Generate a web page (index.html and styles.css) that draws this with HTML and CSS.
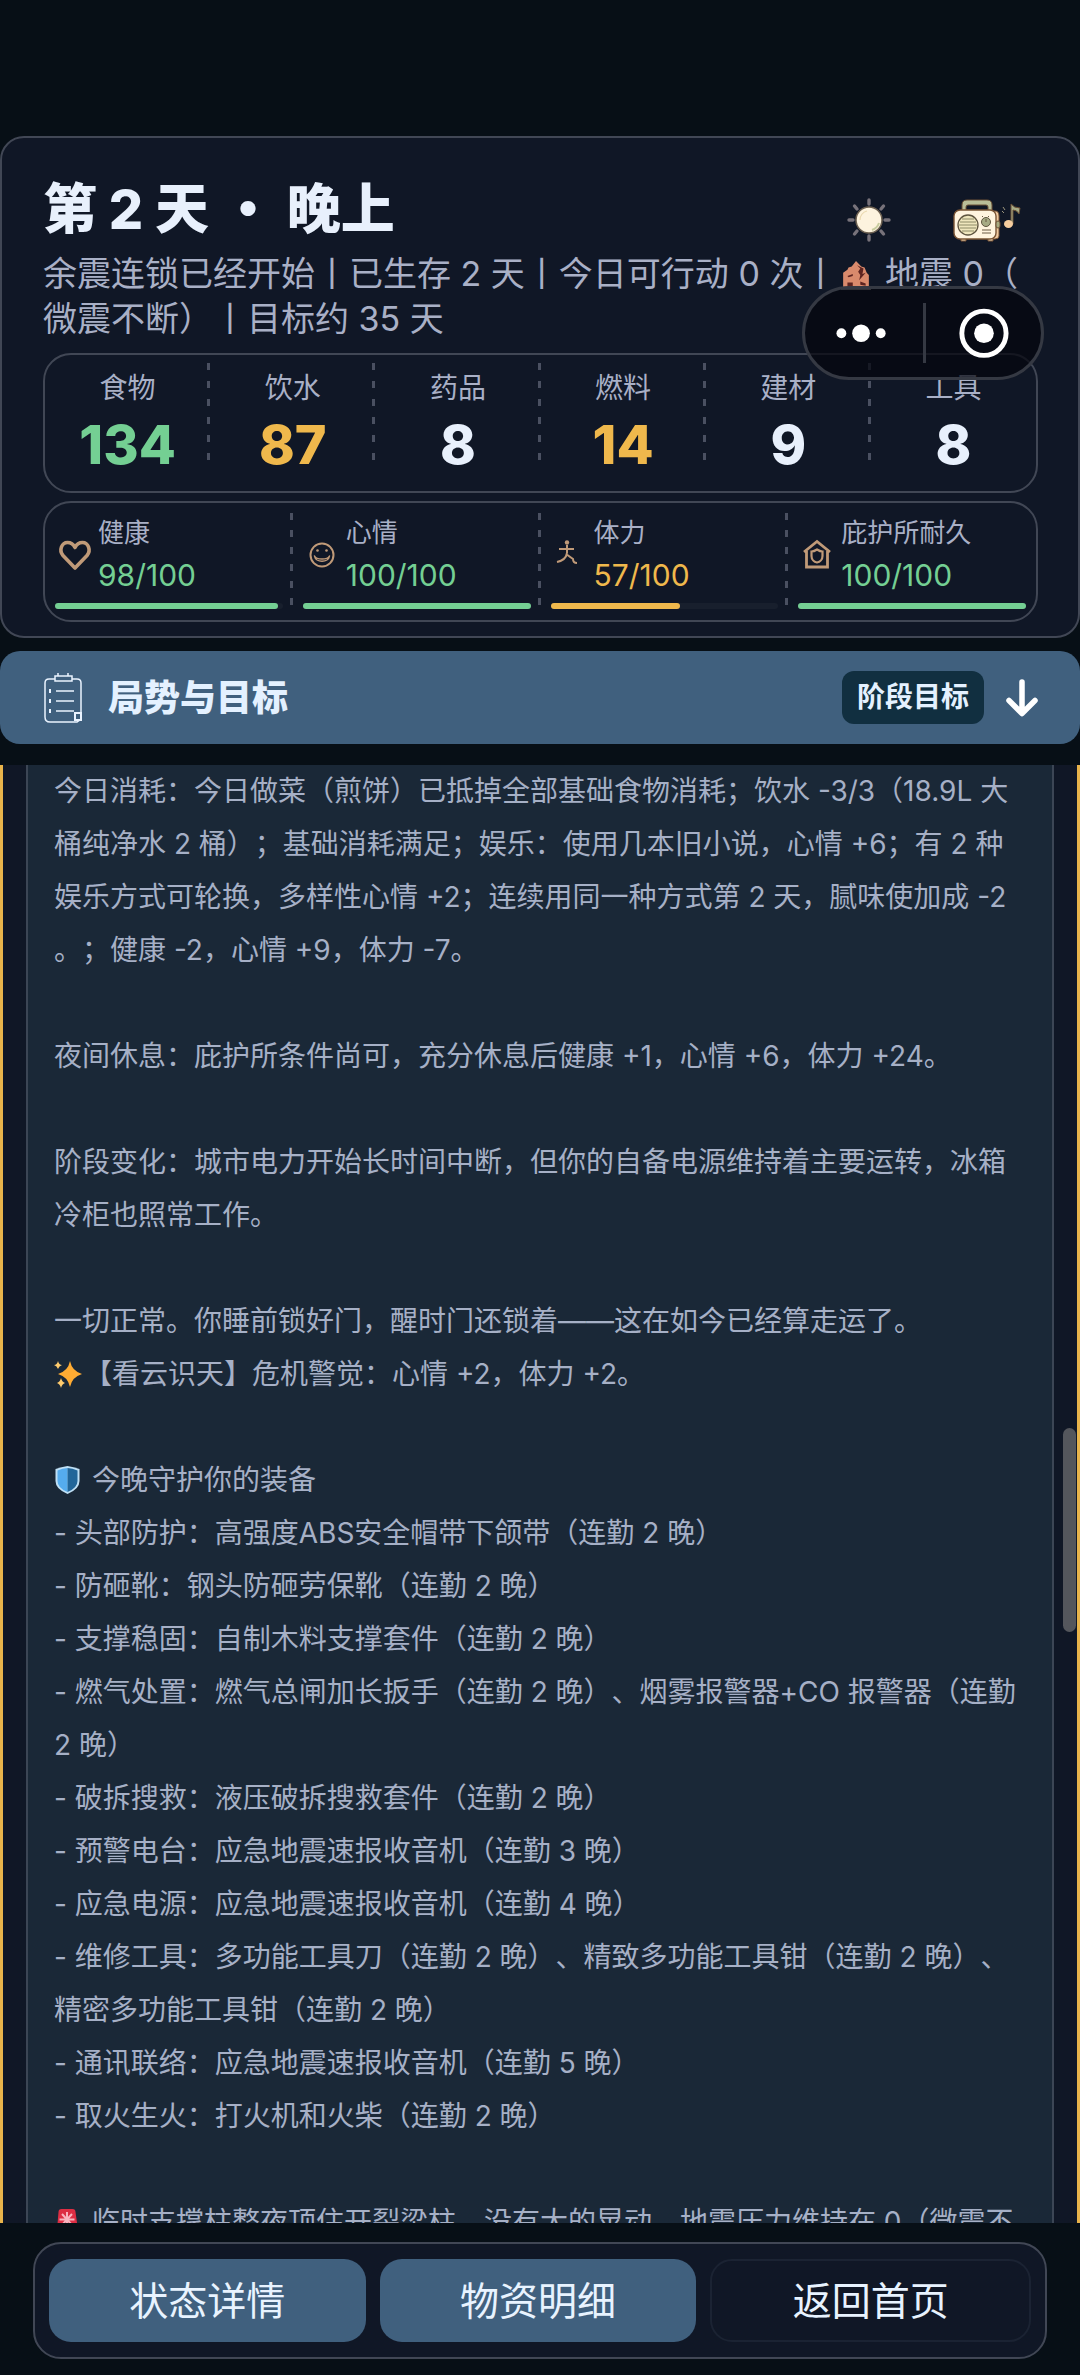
FILE: index.html
```html
<!DOCTYPE html>
<html lang="zh-CN">
<head>
    <meta charset="UTF-8">
    <meta name="viewport" content="width=device-width, initial-scale=1.0">
    <title>第 2 天 · 晚上</title>
    <link rel="stylesheet" href="styles.css">
</head>
<body>
    <header class="status">
        <div class="status-top">
            <h1>第 2 天 <span class="dot">·</span> 晚上</h1>
            <div class="status-icons">
                <svg class="icon-sun" viewBox="0 0 44 44" aria-hidden="true">
                    <g stroke="#77727a" stroke-width="3.4" stroke-linecap="round">
                        <path d="M22 2v4M22 38v4M2 22h4M38 22h4M7.500 8l2.500 3M34 11l2.500-3M7.500 36l2.500-3M34 33l2.500 3"/>
                    </g>
                    <circle cx="22" cy="22" r="13" fill="#fdf3de" stroke="#6d6152" stroke-width="1.500"/>
                    <path d="M13 22a9 9 0 0 1 7-9" fill="none" stroke="#ead9b0" stroke-width="1.200"/>
                    <path d="M25 32a11 11 0 0 0 7-7" fill="none" stroke="#c9cda0" stroke-width="2"/>
                </svg>
                <svg class="icon-radio" viewBox="0 0 68 44" aria-hidden="true">
                    <path d="M9 13V7q0-5 5-5h20q5 0 5 5v6h-4V9q0-2-2-2H15q-2 0-2 2v4z" fill="#b9bd98" stroke="#6b5136"/>
                    <path d="M36 13h6q4 0 4 5v20q0 3-4 3h-6z" fill="#efc9a0" stroke="#7a5536"/>
                    <path d="M8 39h5v4H8zM35 39h5v4h-5z" fill="#f2dcb8" stroke="#7a5536"/>
                    <rect x="1" y="12" width="42" height="29" rx="6" fill="#fff4df" stroke="#7a5536" stroke-width="1.400"/>
                    <rect x="43" y="23" width="4" height="7" rx="2" fill="#a8aa80" stroke="#6b5136"/>
                    <circle cx="15" cy="27" r="10" fill="#efe6bd" stroke="#5f5540" stroke-width="1.300"/>
                    <path d="M9 21h12M7 24h16M6 27h18M7 30h16M9 33h12" stroke="#8d8a66"/>
                    <circle cx="33" cy="24" r="4.500" fill="#a6aa84" stroke="#5f5540"/>
                    <path d="M33 21v3M29 32h9M29 35h9M29 18l1 1M36 18l-1 1" stroke="#6b5b45"/>
                    <path d="M58 26V6q3 4 9 4l-1 6q-2-4-6-4v14z" fill="#a8ab86" stroke="#6b5136"/>
                    <ellipse cx="55.500" cy="26" rx="4.500" ry="4" fill="#f5cd9f"/>
                    <path d="M50 9l2 3M49 13l2 2" stroke="#9b947c"/>
                </svg>
            </div>
        </div>

        <p class="summary">余震连锁已经开始丨已生存 2 天丨今日可行动 0 次丨<svg class="icon-ruin" viewBox="0 0 28 28" aria-hidden="true"><path d="M2 26V12l4-3 1-2 3-1 4-5 5 5 3 1 2 5 2 2v12z" fill="#d98a6c"/><path d="M15 5l6 3-1 5 3-1-6 7 1-5-2-3 2-3zM6 15l5-2v2l-4 1zM6 21h5v4H6zM18 20l5 2v2l-5-1z" fill="#5d2420"/><path d="M0 26h28v2H0z" fill="#a5a09f"/></svg> 地震 0（微震不断）丨目标约 35 天</p>

        <dl class="resources">
            <div class="resource"><dt>食物</dt><dd class="good">134</dd></div>
            <div class="resource"><dt>饮水</dt><dd class="warn">87</dd></div>
            <div class="resource"><dt>药品</dt><dd>8</dd></div>
            <div class="resource"><dt>燃料</dt><dd class="warn">14</dd></div>
            <div class="resource"><dt>建材</dt><dd>9</dd></div>
            <div class="resource"><dt>工具</dt><dd>8</dd></div>
        </dl>

        <div class="vitals">
            <div class="vital good">
                <div class="vital-info">
                    <svg viewBox="0 0 40 40" aria-hidden="true"><path d="M20 33L8 20.500C3.500 15 7 7.500 12.500 7.500c3.500 0 6 2 7.500 5 1.500-3 4-5 7.500-5C33 7.500 36.500 15 32 20.500z" fill="none" stroke="#c09a78" stroke-width="3.600" stroke-linejoin="round"/></svg>
                    <div><span class="vital-name">健康</span><span class="vital-value">98/100</span></div>
                </div>
                <div class="bar"><div class="bar-fill" style="width: 98%"></div></div>
            </div>
            <div class="vital good">
                <div class="vital-info">
                    <svg viewBox="0 0 40 40" aria-hidden="true"><g fill="none" stroke="#c09a78" stroke-width="2"><circle cx="19" cy="20" r="11.500"/><path d="M11.500 21c1 7 14 7 15 0-2 4-13 4-15 0z" stroke-width="1.500" stroke-linejoin="round"/></g><circle cx="14.500" cy="15.500" r="1.300" fill="#c09a78"/><circle cx="23.500" cy="15.500" r="1.300" fill="#c09a78"/></svg>
                    <div><span class="vital-name">心情</span><span class="vital-value">100/100</span></div>
                </div>
                <div class="bar"><div class="bar-fill" style="width: 100%"></div></div>
            </div>
            <div class="vital warn">
                <div class="vital-info">
                    <svg viewBox="0 0 40 40" aria-hidden="true"><circle cx="16" cy="7.500" r="2.200" fill="#c09a78"/><path d="M8 14h15M16 10v8M16 18q-1 7-10 9M15 19l7 5q0 4 4 4" fill="none" stroke="#c09a78" stroke-width="2"/></svg>
                    <div><span class="vital-name">体力</span><span class="vital-value">57/100</span></div>
                </div>
                <div class="bar"><div class="bar-fill" style="width: 57%"></div></div>
            </div>
            <div class="vital good">
                <div class="vital-info">
                    <svg viewBox="0 0 40 40" aria-hidden="true"><path d="M6 17L19 6.500 32 17M8.500 16v16h21V16" fill="none" stroke="#c09a78" stroke-width="2.800"/><path d="M19 14.500q3 2 5.500 2V21c0 3.500-2.500 6-5.500 6.500-3-.5-5.500-3-5.500-6.500v-4.500q2.500 0 5.500-2z" fill="none" stroke="#c09a78" stroke-width="2.200"/></svg>
                    <div><span class="vital-name">庇护所耐久</span><span class="vital-value">100/100</span></div>
                </div>
                <div class="bar"><div class="bar-fill" style="width: 100%"></div></div>
            </div>
        </div>

        <!-- mini program capsule, floats over the header -->
        <div class="capsule">
            <button type="button" aria-label="更多">
                <svg viewBox="0 0 120 88" aria-hidden="true"><g fill="#fff"><circle cx="37" cy="44" r="5"/><circle cx="57" cy="44" r="9"/><circle cx="77" cy="44" r="5"/></g></svg>
            </button>
            <button type="button" aria-label="关闭">
                <svg viewBox="0 0 120 88" aria-hidden="true"><circle cx="62" cy="44" r="22.500" fill="none" stroke="#fff" stroke-width="5"/><circle cx="62" cy="44" r="10" fill="#fff"/></svg>
            </button>
        </div>
    </header>

    <section class="goal-bar">
        <svg class="icon-clipboard" viewBox="0 0 38 50" aria-hidden="true">
            <g fill="none" stroke="#eaf3ff" stroke-width="1.500">
                <path d="M11 6H5q-4 0-4 4v34q0 5 5 5h27l4-3V10q0-4-4-4h-5M11 3h17v5H11zM14 0v3M24 0v3"/>
                <path d="M12 18h18M12 28h18M12 38h18"/>
                <path d="M6 16v4M6 26v4M6 36v4" stroke-width="2"/>
                <path d="M31 40h6v7h-6z" stroke-width="2"/>
            </g>
        </svg>
        <h2>局势与目标</h2>
        <button type="button" class="goal-tag">阶段目标</button>
        <svg class="icon-arrow" viewBox="0 0 32 38" aria-hidden="true"><path d="M16 3v31M3 21.500l13 13 13-13" fill="none" stroke="#fff" stroke-width="5.500" stroke-linecap="round" stroke-linejoin="round"/></svg>
    </section>

    <main class="log">
        <div class="log-panel">
            <p>今日消耗：今日做菜（煎饼）已抵掉全部基础食物消耗；饮水 -3/3（18.9L 大桶纯净水 2 桶）；基础消耗满足；娱乐：使用几本旧小说，心情 +6；有 2 种娱乐方式可轮换，多样性心情 +2；连续用同一种方式第 2 天，腻味使加成 -2。；健康 -2，心情 +9，体力 -7。</p>
            <p>夜间休息：庇护所条件尚可，充分休息后健康 +1，心情 +6，体力 +24。</p>
            <p>阶段变化：城市电力开始长时间中断，但你的自备电源维持着主要运转，冰箱冷柜也照常工作。</p>
            <p>一切正常。你睡前锁好门，醒时门还锁着——这在如今已经算走运了。<br><svg class="emoji" viewBox="0 0 28 28" aria-hidden="true"><path d="M16 1q2 10 12 13-10 3-12 13-2-10-12-13 10-3 12-13z" fill="#ffac33"/><path d="M4 1q1 4 4 4-3 1-4 4-1-3-4-4 3 0 4-4zM7 18q1 4 4 5-3 1-4 5-1-4-4-5 3-1 4-5z" fill="#ffcc6e"/></svg>【看云识天】危机警觉：心情 +2，体力 +2。</p>
            <div class="gear">
                <p class="gear-title"><svg class="emoji" viewBox="0 0 28 28" aria-hidden="true"><path d="M13.500 0q6 1 12 3v12q0 8-12 13-12-5-12-13V3q6-2 12-3z" fill="#bfe0f5"/><path d="M13.500 2q-5 0-10 2.500V15q0 7 10 11z" fill="#55acee"/><path d="M13.500 2q5 0 10 2.500V15q0 7-10 11z" fill="#226699"/></svg> 今晚守护你的装备</p>
                <p>- 头部防护：高强度ABS安全帽带下颌带（连勤 2 晚）</p>
                <p>- 防砸靴：钢头防砸劳保靴（连勤 2 晚）</p>
                <p>- 支撑稳固：自制木料支撑套件（连勤 2 晚）</p>
                <p>- 燃气处置：燃气总闸加长扳手（连勤 2 晚）、烟雾报警器+CO 报警器（连勤 2 晚）</p>
                <p>- 破拆搜救：液压破拆搜救套件（连勤 2 晚）</p>
                <p>- 预警电台：应急地震速报收音机（连勤 3 晚）</p>
                <p>- 应急电源：应急地震速报收音机（连勤 4 晚）</p>
                <p>- 维修工具：多功能工具刀（连勤 2 晚）、精致多功能工具钳（连勤 2 晚）、精密多功能工具钳（连勤 2 晚）</p>
                <p>- 通讯联络：应急地震速报收音机（连勤 5 晚）</p>
                <p>- 取火生火：打火机和火柴（连勤 2 晚）</p>
            </div>
            <p><svg class="emoji" viewBox="0 0 28 28" aria-hidden="true"><path d="M3 22L4.500 4q0-3 3-3h11q3 0 3 3L24 22z" fill="#dd2e44"/><path d="M2 22h23v6H2z" fill="#99aab5"/><path d="M13 4v15M5.500 11.500h15M8 6l10 11M18 6L8 17" stroke="#f9b5c0" stroke-width="2"/></svg> 临时支撑柱整夜顶住开裂梁柱，没有大的晃动，地震压力维持在 0（微震不断）。</p>
        </div>
        <div class="scroll-thumb"></div>
    </main>

    <nav class="actions">
        <button type="button">状态详情</button>
        <button type="button">物资明细</button>
        <button type="button" class="plain">返回首页</button>
    </nav>
</body>
</html>
```
FILE: styles.css
```css
/* General styles */
* {
    box-sizing: border-box;
}

body {
    display: flex;
    flex-direction: column;
    height: 100vh;
    margin: 0;
    padding-top: 136px;
    background-color: #070f16;
    color: #e8f0fc;
    font-family: Inter, "Noto Sans CJK SC", sans-serif;
    text-spacing-trim: space-all;
}

h1, h2, p, dl, dd {
    margin: 0;
}

button {
    border: none;
    padding: 0;
    color: inherit;
    font-family: inherit;
    cursor: pointer;
}

svg {
    display: block;
}

.good {
    --tone: #74cf93;
}

.warn {
    --tone: #efb84c;
}

/* Header */
.status {
    position: relative;
    padding: 40px 40px 14px 41px;
    border: 2px solid #414755;
    border-radius: 24px;
    background-color: #101726;
}

.status-top {
    display: flex;
    justify-content: space-between;
    align-items: flex-end;
}

h1 {
    font-size: 54px;
    font-weight: 800;
    line-height: 64px;
}

.dot {
    font-family: "Noto Sans CJK SC", sans-serif;
    line-height: 1;
}

.status-icons {
    display: flex;
    gap: 62px;
    padding-right: 17px;
}

.icon-sun {
    width: 44px;
    height: 44px;
}

.icon-radio {
    width: 68px;
    height: 44px;
}

.summary {
    margin: 9px 0 12px;
    color: #a9b0c6;
    font-size: 34px;
    line-height: 45px;
    line-break: anywhere;
}

.icon-ruin {
    display: inline-block;
    width: 30px;
    height: 30px;
    margin: 0 4px;
    vertical-align: -4px;
}

.resources {
    display: grid;
    grid-template-columns: repeat(6, 1fr);
    padding: 8px 0 16px;
    border: 2px solid #414755;
    border-radius: 28px;
    text-align: center;
}

.resource {
    padding-top: 7px;
    background: repeating-linear-gradient(#4a5061 0 7px, transparent 7px 18px) right top / 3px 98px no-repeat;
}

.resource:last-child,
.vital:last-child {
    background: none;
}

.resource dt {
    color: #a9b0c6;
    font-size: 28px;
    line-height: 36px;
}

.resource dd {
    margin-top: 9px;
    color: var(--tone, #e8f0fc);
    font-size: 54px;
    font-weight: 800;
    line-height: 60px;
}

.vitals {
    display: grid;
    grid-template-columns: repeat(4, 1fr);
    margin-top: 8px;
    padding: 10px 0 11px;
    border: 2px solid #414755;
    border-radius: 28px;
}

.vital {
    padding: 0 10px;
    background: repeating-linear-gradient(#4a5061 0 7px, transparent 7px 17px) right top / 3px 92px no-repeat;
}

.vital-info {
    display: flex;
    align-items: center;
    gap: 3px;
}

.vital-info svg {
    width: 40px;
    height: 40px;
}

.vital-name,
.vital-value {
    display: block;
}

.vital-name {
    color: #a9b0c6;
    font-size: 26px;
    line-height: 40px;
}

.vital-value {
    color: var(--tone);
    font-size: 30px;
    line-height: 44px;
}

.bar {
    height: 6px;
    margin-top: 6px;
    border-radius: 3px;
    background-color: #181f2d;
}

.bar-fill {
    height: 100%;
    border-radius: 3px;
    background-color: var(--tone);
}

.capsule {
    position: absolute;
    top: 148px;
    right: 34px;
    display: flex;
    width: 242px;
    height: 94px;
    border: 3px solid #353943;
    border-radius: 47px;
    background-color: rgba(4, 6, 14, 0.72);
}

.capsule button {
    flex: 1;
    background: none;
}

.capsule button + button {
    background: linear-gradient(#353943, #353943) left center / 3px 60px no-repeat;
}

.capsule svg {
    width: 100%;
}

/* Goal bar */
.goal-bar {
    display: flex;
    align-items: center;
    margin: 13px 0 21px;
    padding: 20px 42px 20px 44px;
    border-radius: 20px;
    background-color: #40607e;
}

.icon-clipboard {
    width: 38px;
    height: 50px;
}

h2 {
    flex: 1;
    margin-left: 26px;
    color: #e4f1ff;
    font-size: 36px;
    font-weight: 900;
    line-height: 48px;
}

.goal-tag {
    margin-right: 22px;
    padding: 0 15px;
    border-radius: 12px;
    background-color: #112f40;
    color: #e4f1ff;
    font-size: 28px;
    font-weight: 700;
    line-height: 53px;
}

.icon-arrow {
    width: 32px;
    height: 38px;
}

/* Log */
.log {
    position: relative;
    flex: 1;
    min-height: 0;
    overflow: hidden;
    border: solid #e9b44b;
    border-width: 0 3px;
    background-color: #101726;
}

.log-panel {
    margin: 0 23px;
    padding: 0 26px;
    border: solid #3c4655;
    border-width: 0 2px;
    background-color: #1a2837;
    color: #a6b0c6;
    font-size: 28px;
    line-height: 53px;
    line-break: anywhere;
}

.log-panel > * + * {
    margin-top: 53px;
}

.emoji {
    display: inline-block;
    width: 28px;
    height: 28px;
    margin-right: 2px;
    vertical-align: -4px;
}

.scroll-thumb {
    position: absolute;
    top: 45.5%;
    right: 1px;
    width: 13px;
    height: 14%;
    border-radius: 7px;
    background-color: #54565c;
}

/* Bottom buttons */
.actions {
    display: flex;
    gap: 14px;
    margin: 19px 33px 16px;
    padding: 15px 14px;
    border: 2px solid #414755;
    border-radius: 28px;
    background-color: #101726;
}

.actions button {
    flex: 1;
    height: 83px;
    border-radius: 22px;
    background-color: #40607e;
    color: #e8f3ff;
    font-size: 39px;
    line-height: 48px;
}

.actions .plain {
    border: 2px solid #1b2333;
    background-color: #101726;
}
```
